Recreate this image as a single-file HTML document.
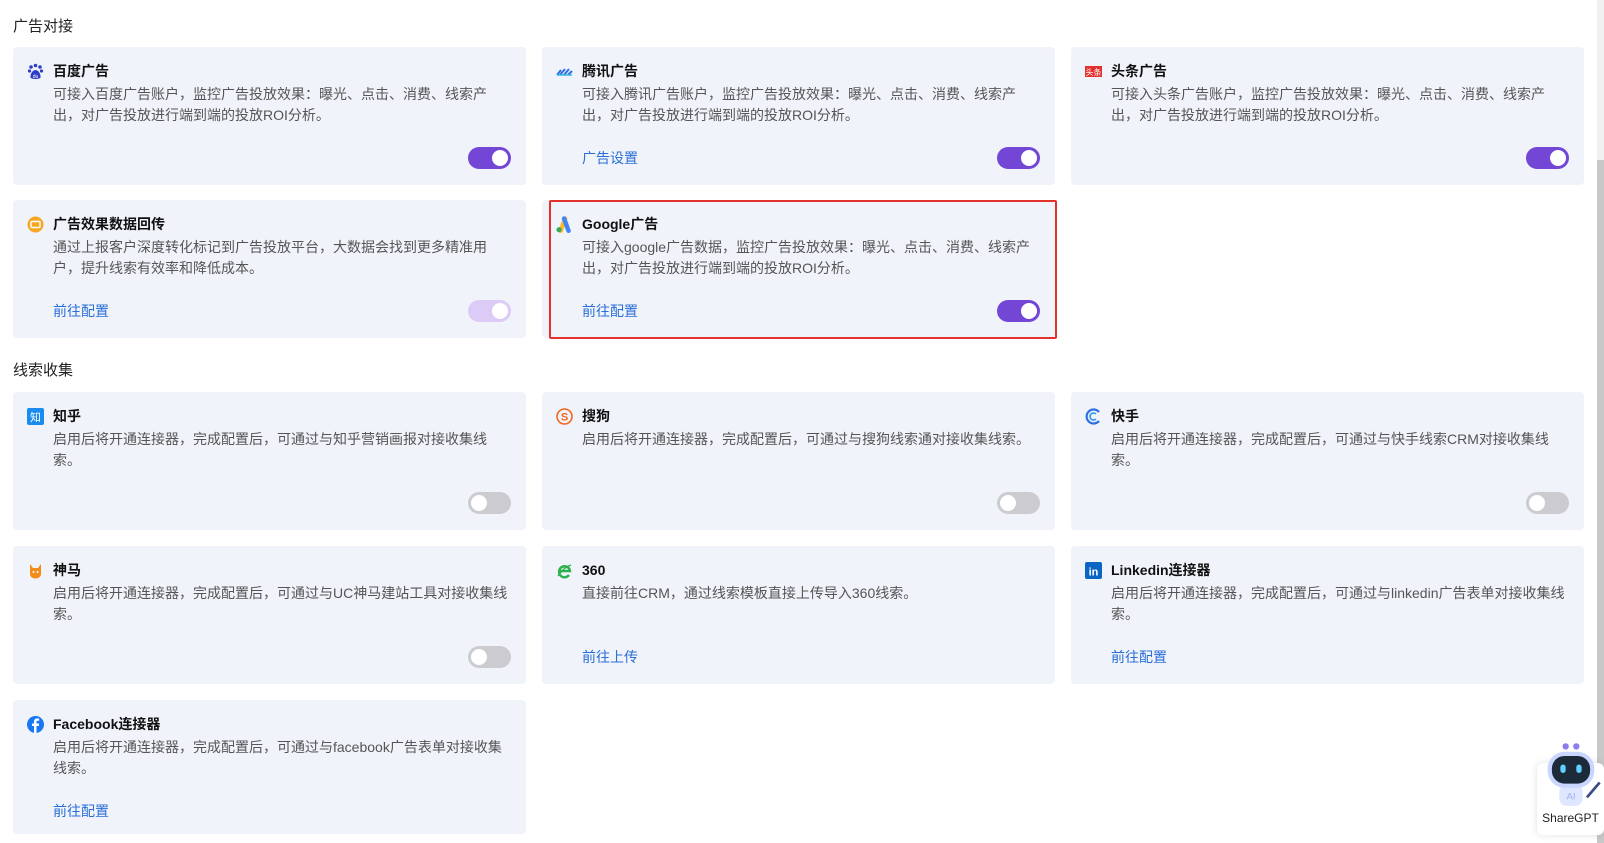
<!DOCTYPE html>
<html><head><meta charset="utf-8">
<style>
*{margin:0;padding:0;box-sizing:border-box}
body{width:1604px;height:843px;background:#fff;position:relative;overflow:hidden;font-family:"Liberation Sans","Noto Sans CJK SC",sans-serif;color:#1f1f1f}
.h{position:absolute;left:13px;font-size:15px;color:#222;line-height:20px}
.c{position:absolute;width:513px;height:138px;background:#f0f3fa;border-radius:4px}
.ic{position:absolute;left:14px;top:16px;width:17px;height:17px}
.t{position:absolute;left:40px;top:14px;font-size:14px;font-weight:bold;line-height:20px;color:#111}
.d{position:absolute;left:40px;top:37px;font-size:14px;line-height:21px;color:#555;white-space:nowrap}
.l{position:absolute;left:40px;top:101px;font-size:14px;line-height:20px;color:#2a6fd6}
.tg{position:absolute;right:15px;top:100px;width:43px;height:22px;border-radius:11px;background:#7446d6}
.tg::after{content:"";position:absolute;right:3px;top:3px;width:16px;height:16px;border-radius:50%;background:#fff}
.tg.lt{background:#dccbf6}
.tg.off{background:#ccccd0}
.tg.off::after{left:3px;right:auto}
.red{position:absolute;left:549px;top:200px;width:508px;height:139px;border:2px solid #e3322b;border-radius:2px}
</style></head><body>
<div class="h" style="top:17px">广告对接</div>
<div class="h" style="top:361px">线索收集</div>

<div class="c" style="left:13px;top:47px">
<svg class="ic" viewBox="0 0 17 17"><circle cx="4" cy="4" r="1.8" fill="#2e3fc7"/><circle cx="8.5" cy="2.5" r="1.8" fill="#2e3fc7"/><circle cx="13" cy="4" r="1.8" fill="#2e3fc7"/><circle cx="2.5" cy="8" r="1.6" fill="#2e3fc7"/><circle cx="14.5" cy="8" r="1.6" fill="#2e3fc7"/><path d="M8.5 7C5 7 3 12 3.5 14.5 4 16.5 13 16.5 13.5 14.5 14 12 12 7 8.5 7Z" fill="#2e3fc7"/><text x="8.5" y="15" font-size="5" fill="#fff" text-anchor="middle" font-family="Liberation Sans">du</text></svg>
<div class="t">百度广告</div>
<div class="d">可接入百度广告账户，监控广告投放效果：曝光、点击、消费、线索产<br>出，对广告投放进行端到端的投放ROI分析。</div>
<div class="tg"></div></div>

<div class="c" style="left:542px;top:47px">
<svg class="ic" viewBox="0 0 17 17"><path d="M1 12L5 7M4 12L9 6M8 12L13 6M12 12L16 8" stroke="#2f6fe0" stroke-width="2"/><path d="M1 12h15" stroke="#37b7e8" stroke-width="1.5"/></svg>
<div class="t">腾讯广告</div>
<div class="d">可接入腾讯广告账户，监控广告投放效果：曝光、点击、消费、线索产<br>出，对广告投放进行端到端的投放ROI分析。</div>
<div class="l">广告设置</div>
<div class="tg"></div></div>

<div class="c" style="left:1071px;top:47px">
<svg class="ic" viewBox="0 0 17 17"><rect x="0" y="3" width="17" height="11" fill="#e3312f"/><text x="8.5" y="12" font-size="8" fill="#fff" text-anchor="middle" font-family="Noto Sans CJK SC">头条</text></svg>
<div class="t">头条广告</div>
<div class="d">可接入头条广告账户，监控广告投放效果：曝光、点击、消费、线索产<br>出，对广告投放进行端到端的投放ROI分析。</div>
<div class="tg"></div></div>

<div class="c" style="left:13px;top:200px">
<svg class="ic" viewBox="0 0 17 17"><circle cx="8.5" cy="8.5" r="8" fill="#f5a623"/><rect x="4" y="5.5" width="9" height="6" rx="1" fill="none" stroke="#fff" stroke-width="1.4"/></svg>
<div class="t">广告效果数据回传</div>
<div class="d">通过上报客户深度转化标记到广告投放平台，大数据会找到更多精准用<br>户，提升线索有效率和降低成本。</div>
<div class="l">前往配置</div>
<div class="tg lt"></div></div>

<div class="c" style="left:542px;top:200px">
<svg class="ic" viewBox="0 0 17 17" style="width:19px;height:19px;left:12px;top:14px"><path d="M6 15L10 4" stroke="#f9bb2d" stroke-width="4" stroke-linecap="round"/><path d="M9 4L13 15" stroke="#4285f4" stroke-width="4" stroke-linecap="round"/><circle cx="4.5" cy="14" r="2.3" fill="#34a853"/></svg>
<div class="t">Google广告</div>
<div class="d">可接入google广告数据，监控广告投放效果：曝光、点击、消费、线索产<br>出，对广告投放进行端到端的投放ROI分析。</div>
<div class="l">前往配置</div>
<div class="tg"></div></div>
<div class="red"></div>

<div class="c" style="left:13px;top:392px">
<svg class="ic" viewBox="0 0 17 17"><rect width="17" height="17" rx="2" fill="#1a8cf0"/><text x="8.5" y="13" font-size="11" fill="#fff" text-anchor="middle" font-family="Noto Sans CJK SC">知</text></svg>
<div class="t">知乎</div>
<div class="d">启用后将开通连接器，完成配置后，可通过与知乎营销画报对接收集线<br>索。</div>
<div class="tg off"></div></div>

<div class="c" style="left:542px;top:392px">
<svg class="ic" viewBox="0 0 17 17"><circle cx="8.5" cy="8.5" r="7.5" fill="none" stroke="#f26522" stroke-width="1.6"/><text x="8.5" y="12.5" font-size="11" font-weight="bold" fill="#f26522" text-anchor="middle" font-family="Liberation Sans">S</text></svg>
<div class="t">搜狗</div>
<div class="d">启用后将开通连接器，完成配置后，可通过与搜狗线索通对接收集线索。</div>
<div class="tg off"></div></div>

<div class="c" style="left:1071px;top:392px">
<svg class="ic" viewBox="0 0 17 17"><path d="M14 4A7 7 0 1 0 14 13" fill="none" stroke="#2d6ee0" stroke-width="2.2"/><path d="M11 6A3.5 3.5 0 1 0 11 11" fill="none" stroke="#39a0f0" stroke-width="1.8"/></svg>
<div class="t">快手</div>
<div class="d">启用后将开通连接器，完成配置后，可通过与快手线索CRM对接收集线<br>索。</div>
<div class="tg off"></div></div>

<div class="c" style="left:13px;top:546px">
<svg class="ic" viewBox="0 0 17 17"><path d="M3 2L6 6H11L14 2 14 12C14 15 11 16.5 8.5 16.5 6 16.5 3 15 3 12Z" fill="#f28c1a"/><circle cx="6.5" cy="10" r="1" fill="#fff"/><circle cx="10.5" cy="10" r="1" fill="#fff"/></svg>
<div class="t">神马</div>
<div class="d">启用后将开通连接器，完成配置后，可通过与UC神马建站工具对接收集线<br>索。</div>
<div class="tg off"></div></div>

<div class="c" style="left:542px;top:546px">
<svg class="ic" viewBox="0 0 17 17"><path d="M4 9H14A5.5 5.5 0 1 0 13 13" fill="none" stroke="#2bb24c" stroke-width="2.4"/><path d="M2 14C4 11 8 5 15 3" stroke="#2bb24c" stroke-width="1.4" fill="none"/></svg>
<div class="t">360</div>
<div class="d">直接前往CRM，通过线索模板直接上传导入360线索。</div>
<div class="l">前往上传</div></div>

<div class="c" style="left:1071px;top:546px">
<svg class="ic" viewBox="0 0 17 17"><rect width="17" height="17" rx="2" fill="#0a66c2"/><text x="8.5" y="13.5" font-size="11" font-weight="bold" fill="#fff" text-anchor="middle" font-family="Liberation Sans">in</text></svg>
<div class="t">Linkedin连接器</div>
<div class="d">启用后将开通连接器，完成配置后，可通过与linkedin广告表单对接收集线<br>索。</div>
<div class="l">前往配置</div></div>

<div class="c" style="left:13px;top:700px;height:134px">
<svg class="ic" viewBox="0 0 17 17"><circle cx="8.5" cy="8.5" r="8.5" fill="#1877f2"/><path d="M9.5 17V10H11.8L12.1 7.5H9.5V6C9.5 5.2 9.8 4.8 10.8 4.8H12.2V2.6C11.7 2.5 11 2.4 10.3 2.4 8.3 2.4 7 3.6 7 5.7V7.5H5V10H7V17Z" fill="#fff"/></svg>
<div class="t">Facebook连接器</div>
<div class="d">启用后将开通连接器，完成配置后，可通过与facebook广告表单对接收集<br>线索。</div>
<div class="l">前往配置</div></div>

<div style="position:absolute;left:1597px;top:0;width:7px;height:843px;background:#f1f1f1"></div>
<div style="position:absolute;left:1597px;top:160px;width:7px;height:683px;background:#c8c8c8"></div>

<div style="position:absolute;left:1537px;top:763px;width:67px;height:72px;background:#fff;border-radius:6px;box-shadow:0 0 8px rgba(0,0,0,.12)"></div>
<svg style="position:absolute;left:1538px;top:740px" width="66" height="68" viewBox="0 0 62 64">
<circle cx="26" cy="6" r="3" fill="#8b7df0"/><circle cx="36" cy="6" r="3" fill="#8b7df0"/>
<rect x="20" y="42" width="22" height="20" rx="7" fill="#dfe6ff"/>
<text x="31" y="56" font-size="9" fill="#a0b0f0" text-anchor="middle" font-family="Liberation Sans">AI</text>
<rect x="9" y="11" width="44" height="34" rx="16" fill="#c9d6ff"/>
<rect x="13" y="15" width="36" height="26" rx="12" fill="#1c2a3a"/>
<rect x="21" y="23" width="5" height="8" rx="2.5" fill="#5fd0ff"/><rect x="36" y="23" width="5" height="8" rx="2.5" fill="#5fd0ff"/>
<path d="M46 54L58 40" stroke="#3a4a8a" stroke-width="2.5"/>
</svg>
<div style="position:absolute;left:1537px;top:811px;width:67px;text-align:center;font-size:12px;color:#222">ShareGPT</div>
</body></html>
